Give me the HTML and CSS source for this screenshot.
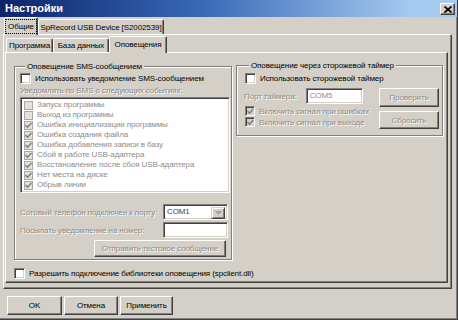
FILE: index.html
```html
<!DOCTYPE html>
<html lang="ru">
<head>
<meta charset="utf-8">
<title>Настройки</title>
<link rel="stylesheet" href="styles.css">
</head>
<body>
<div class="window">
  <div class="titlebar">
    <span class="title">Настройки</span>
    <span class="close"><svg width="8" height="7" viewBox="0 0 8 7"><path d="M0.5 0.5 L7.5 6.5 M7.5 0.5 L0.5 6.5" stroke="#000" stroke-width="1.8"/></svg></span>
  </div>
  <div class="tabs outer-tabs">
    <div class="tab active w-general"><span class="focus">Общие</span></div>
    <div class="tab w-device">SpRecord USB Device [S2002539]</div>
  </div>
  <div class="frame">
    <div class="tabs inner-tabs">
      <div class="tab w-prog">Программа</div>
      <div class="tab w-db">База данных</div>
      <div class="tab active w-notify">Оповещения</div>
    </div>
    <div class="panel">
      <div class="groups">
        <fieldset class="group sms">
          <legend>Оповещение SMS-сообщением</legend>
          <label class="check row-main"><span class="cb"></span><span>Использовать уведомление SMS-сообщением</span></label>
          <div class="dis-label events-label">Уведомлять по SMS о следующих событиях:</div>
          <div class="listbox">
            <div class="item"><span class="lcb"></span>Запуск программы</div>
            <div class="item"><span class="lcb"></span>Выход из программы</div>
            <div class="item"><span class="lcb"><svg width="7" height="7" viewBox="0 0 7 7"><path d="M0.5 3 L2.5 5.2 L6.5 1" fill="none" stroke="#7c7c7c" stroke-width="1.5"/></svg></span>Ошибка инициализации программы</div>
            <div class="item"><span class="lcb"><svg width="7" height="7" viewBox="0 0 7 7"><path d="M0.5 3 L2.5 5.2 L6.5 1" fill="none" stroke="#7c7c7c" stroke-width="1.5"/></svg></span>Ошибка создания файла</div>
            <div class="item"><span class="lcb"><svg width="7" height="7" viewBox="0 0 7 7"><path d="M0.5 3 L2.5 5.2 L6.5 1" fill="none" stroke="#7c7c7c" stroke-width="1.5"/></svg></span>Ошибка добавления записи в базу</div>
            <div class="item"><span class="lcb"><svg width="7" height="7" viewBox="0 0 7 7"><path d="M0.5 3 L2.5 5.2 L6.5 1" fill="none" stroke="#7c7c7c" stroke-width="1.5"/></svg></span>Сбой в работе USB-адаптера</div>
            <div class="item"><span class="lcb"><svg width="7" height="7" viewBox="0 0 7 7"><path d="M0.5 3 L2.5 5.2 L6.5 1" fill="none" stroke="#7c7c7c" stroke-width="1.5"/></svg></span>Восстановление после сбоя USB-адаптера</div>
            <div class="item"><span class="lcb"><svg width="7" height="7" viewBox="0 0 7 7"><path d="M0.5 3 L2.5 5.2 L6.5 1" fill="none" stroke="#7c7c7c" stroke-width="1.5"/></svg></span>Нет места на диске</div>
            <div class="item"><span class="lcb"><svg width="7" height="7" viewBox="0 0 7 7"><path d="M0.5 3 L2.5 5.2 L6.5 1" fill="none" stroke="#7c7c7c" stroke-width="1.5"/></svg></span>Обрыв линии</div>
          </div>
          <div class="field-row port-row">
            <span class="dis-label">Сотовый телефон подключен к порту:</span>
            <span class="combo"><span class="combo-text">COM1</span><span class="combo-btn"><svg width="7" height="4" viewBox="0 0 7 4"><path d="M0 0 H7 L3.5 4 Z" fill="#a0a0a0"/></svg></span></span>
          </div>
          <div class="field-row number-row">
            <span class="dis-label">Посылать уведомление на номер:</span>
            <span class="edit"></span>
          </div>
          <div class="btn dis send-btn">Отправить тестовое сообщение</div>
        </fieldset>
        <fieldset class="group wd">
          <legend>Оповещение через сторожевой таймер</legend>
          <label class="check wd-main"><span class="cb"></span><span>Использовать сторожевой таймер</span></label>
          <div class="wd-body">
            <div class="wd-left">
              <div class="timer-row">
                <span class="dis-label">Порт таймера:</span>
                <span class="edit timer-edit">COM5</span>
              </div>
              <label class="check small dis first"><span class="cb dis-cb"><svg width="7" height="7" viewBox="0 0 7 7"><path d="M0.5 3 L2.5 5.2 L6.5 1" fill="none" stroke="#808080" stroke-width="1.5"/></svg></span><span class="dis-label">Включить сигнал при ошибках</span></label>
              <label class="check small dis"><span class="cb dis-cb"><svg width="7" height="7" viewBox="0 0 7 7"><path d="M0.5 3 L2.5 5.2 L6.5 1" fill="none" stroke="#808080" stroke-width="1.5"/></svg></span><span class="dis-label">Включить сигнал при выходе</span></label>
            </div>
            <div class="wd-buttons">
              <div class="btn dis check-btn">Проверить</div>
              <div class="btn dis reset-btn">Сбросить</div>
            </div>
          </div>
        </fieldset>
      </div>
      <label class="check lib-check"><span class="cb"></span><span>Разрешить подключение библиотеки оповещения (spclient.dll)</span></label>
    </div>
  </div>
  <div class="buttons">
    <div class="btn ok-btn">OK</div>
    <div class="btn cancel-btn">Отмена</div>
    <div class="btn apply-btn">Применить</div>
  </div>
</div>
</body>
</html>
```
FILE: styles.css
```css
* { box-sizing: border-box; margin: 0; padding: 0; }

body {
  width: 458px;
  height: 320px;
  overflow: hidden;
  background: #d4d0c8;
  font-family: "Liberation Sans", Arial, sans-serif;
  font-size: 8px;
  letter-spacing: -0.1px;
  line-height: 11px;
  color: #000;
}

.window {
  width: 458px;
  height: 320px;
  display: flex;
  flex-direction: column;
  border-right: 1px solid #404040;
  border-bottom: 1px solid #404040;
  box-shadow: inset -1px -1px #808080;
}

/* title bar */
.titlebar {
  height: 17px;
  flex: none;
  display: flex;
  align-items: center;
  justify-content: space-between;
  padding: 0 2px 0 5px;
  background: linear-gradient(90deg, #0a246a 0%, #3a6ab8 45%, #a6caf0 90%);
}
.title {
  color: #fff;
  font-size: 11px;
  letter-spacing: 0;
  font-weight: bold;
  line-height: 13px;
}
.close {
  width: 15px;
  height: 12px;
  margin-top: 1px;
  display: flex;
  align-items: center;
  justify-content: center;
  background: #d4d0c8;
  border: 1px solid;
  border-color: #fff #404040 #404040 #fff;
  box-shadow: inset -1px -1px #808080;
}

/* tabs */
.tabs {
  display: flex;
  align-items: flex-end;
  flex: none;
  position: relative;
  z-index: 1;
}
.outer-tabs {
  height: 17px;
  padding-left: 4px;
}
.inner-tabs {
  height: 15px;
  padding-left: 1px;
}
.tab {
  height: 15px;
  display: flex;
  align-items: center;
  justify-content: center;
  white-space: nowrap;
  border: 1px solid;
  border-bottom: none;
  border-color: #fff #404040 transparent #fff;
  border-radius: 2px 2px 0 0;
  box-shadow: inset -1px 0 #808080;
  background: #d4d0c8;
}
.inner-tabs .tab { height: 14px; }
.tab.active {
  height: 18px;
  margin-bottom: -1px;
  padding-bottom: 1px;
}
.inner-tabs .tab.active { height: 17px; }
.focus {
  outline: 1px dotted #000;
  outline-offset: 1px;
  padding: 0 1px;
}
.w-general { width: 34px; }
.w-device { width: 126px; }
.w-prog { width: 47px; }
.w-db { width: 56px; }
.w-notify { width: 58px; }

/* frames */
.frame {
  height: 255px;
  flex: none;
  margin: 0 5px 0 3px;
  padding: 2px 3px 5px 1px;
  display: flex;
  flex-direction: column;
  border: 1px solid;
  border-color: #fff #404040 #404040 #fff;
  box-shadow: inset -1px -1px #808080;
}
.panel {
  flex: 1;
  padding: 8px 4px 0 8px;
  border: 1px solid;
  border-color: #fff #404040 #404040 #fff;
  box-shadow: inset -1px -1px #808080;
}

.groups {
  display: flex;
  align-items: flex-start;
  gap: 4px;
}

.group {
  border: 1px solid #808080;
  box-shadow: inset 1px 1px #fff, 1px 1px #fff;
  display: flex;
  flex-direction: column;
  min-width: 0;
}
.group legend {
  margin-left: 5px;
  padding: 0 2px;
  line-height: 11px;
  background: #d4d0c8;
}
.sms {
  width: 218px;
  padding: 0 1px 2px 5px;
}
.wd {
  width: 207px;
  margin-top: -1px;
  padding: 0 3px 6px 7px;
}

/* checkboxes */
.check {
  display: flex;
  align-items: center;
  gap: 4px;
  white-space: nowrap;
}
.cb {
  width: 11px;
  height: 11px;
  flex: none;
  display: flex;
  align-items: center;
  justify-content: center;
  background: #fff;
  border: 1px solid;
  border-color: #808080 #fff #fff #808080;
  box-shadow: inset 1px 1px #404040, inset -1px -1px #d4d0c8;
}
.cb.dis-cb {
  width: 10px;
  height: 10px;
  background: #d4d0c8;
}
.row-main {
  height: 12px;
}

.dis-label {
  color: #8a8a8a;
  text-shadow: 1px 1px 0 #fff;
  white-space: nowrap;
}
.events-label {
  margin-top: 1px;
  height: 12px;
}

/* list box */
.listbox {
  width: 210px;
  height: 96px;
  padding: 2px 2px 0 2px;
  background: #fff;
  border: 1px solid;
  border-color: #808080 #fff #fff #808080;
  box-shadow: inset 1px 1px #404040, inset -1px -1px #d4d0c8;
}
.item {
  height: 10px;
  line-height: 10px;
  display: flex;
  align-items: center;
  gap: 4px;
  color: #8c8c8c;
  white-space: nowrap;
}
.lcb {
  width: 9px;
  height: 9px;
  margin-left: 1px;
  flex: none;
  display: flex;
  align-items: center;
  justify-content: center;
  background: #e4e2dc;
  border: 1px solid #a8a8a8;
}

/* fields */
.field-row {
  height: 16px;
  display: flex;
  align-items: center;
  justify-content: space-between;
  padding-right: 2px;
}
.port-row { margin-top: 11px; }
.number-row { margin-top: 2px; }
.combo {
  width: 65px;
  height: 16px;
  display: flex;
  padding: 2px;
  background: #fff;
  border: 1px solid;
  border-color: #808080 #fff #fff #808080;
  box-shadow: inset 1px 1px #404040, inset -1px -1px #d4d0c8;
}
.combo-text {
  flex: 1;
  line-height: 10px;
  padding-left: 1px;
  color: #404040;
}
.combo-btn {
  width: 14px;
  height: 12px;
  display: flex;
  align-items: center;
  justify-content: center;
  background: #d4d0c8;
  border: 1px solid;
  border-color: #d4d0c8 #404040 #404040 #d4d0c8;
  box-shadow: inset 1px 1px #fff, inset -1px -1px #808080;
}
.edit {
  width: 65px;
  height: 16px;
  padding: 2px 3px;
  background: #fff;
  border: 1px solid;
  border-color: #808080 #fff #fff #808080;
  box-shadow: inset 1px 1px #404040, inset -1px -1px #d4d0c8;
  line-height: 10px;
}

/* buttons */
.btn {
  display: flex;
  align-items: center;
  justify-content: center;
  white-space: nowrap;
  background: #d4d0c8;
  border: 1px solid;
  border-color: #fff #404040 #404040 #fff;
  box-shadow: inset -1px -1px #808080;
}
.btn.dis {
  color: #8a8a8a;
  text-shadow: 1px 1px 0 #fff;
}
.send-btn {
  width: 132px;
  height: 17px;
  margin-top: 2px;
  margin-left: 74px;
}

/* watchdog group */
.wd-main {
  height: 12px;
  margin-top: 1px;
  margin-left: 1px;
}
.wd-body {
  display: flex;
  margin-top: 4px;
}
.wd-left {
  display: flex;
  flex-direction: column;
}
.timer-row {
  height: 16px;
  display: flex;
  align-items: center;
}
.timer-edit {
  width: 57px;
  height: 16px;
  margin-left: 9px;
  color: #8a8a8a;
}
.check.small {
  height: 10px;
  margin-left: 1px;
}
.check.small.first { margin-top: 2px; }
.check.small + .check.small { margin-top: 1px; }
.wd-buttons {
  margin-left: auto;
  display: flex;
  flex-direction: column;
  gap: 4px;
}
.check-btn { width: 60px; height: 19px; }
.reset-btn { width: 60px; height: 18px; }

.lib-check {
  margin-top: 7px;
  height: 12px;
}

/* bottom buttons */
.buttons {
  display: flex;
  gap: 2px;
  margin-top: 7px;
  padding-left: 7px;
}
.buttons .btn { height: 19px; }
.ok-btn { width: 55px; }
.cancel-btn { width: 54px; }
.apply-btn { width: 53px; }
```
